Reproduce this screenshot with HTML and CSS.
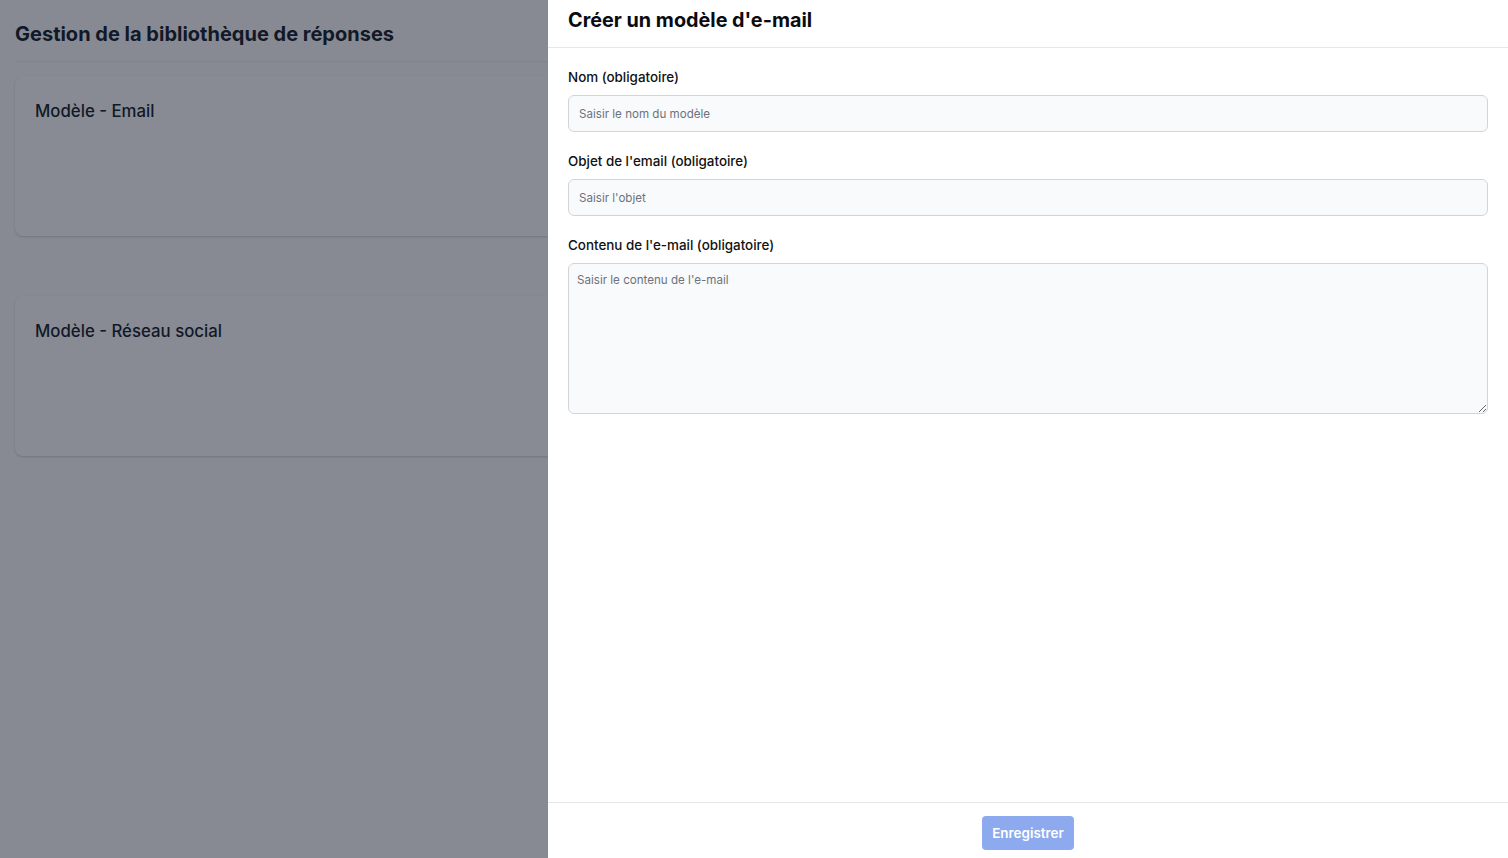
FILE: index.html
```html
<!DOCTYPE html>
<html lang="fr">
<head>
<meta charset="utf-8">
<title>Bibliothèque de réponses</title>
<link rel="stylesheet" href="styles.css">
</head>
<body>
<div class="page">
  <h1 class="page-title">Gestion de la bibliothèque de réponses</h1>
  <div class="cards">
    <div class="card"><h2 class="card-title">Modèle - Email</h2></div>
    <div class="card"><h2 class="card-title">Modèle - Réseau social</h2></div>
  </div>
</div>
<div class="overlay"></div>
<aside class="drawer">
  <header class="drawer-header">
    <h2 class="drawer-title">Créer un modèle d'e-mail</h2>
  </header>
  <div class="drawer-body">
    <div class="field">
      <label class="label">Nom (obligatoire)</label>
      <input class="input" type="text" placeholder="Saisir le nom du modèle">
    </div>
    <div class="field">
      <label class="label">Objet de l'email (obligatoire)</label>
      <input class="input" type="text" placeholder="Saisir l'objet">
    </div>
    <div class="field">
      <label class="label">Contenu de l'e-mail (obligatoire)</label>
      <textarea class="textarea" placeholder="Saisir le contenu de l'e-mail"></textarea>
    </div>
  </div>
  <footer class="drawer-footer">
    <button class="btn" disabled>Enregistrer</button>
  </footer>
</aside>
</body>
</html>
```
FILE: styles.css
```css
* { box-sizing: border-box; }
html, body { margin: 0; height: 100%; }
body {
  font-family: Inter, "Noto Sans", sans-serif;
  background: #fdfdfd;
  color: #111827;
  overflow: hidden;
}
.page {
  padding: 0 15px;
}
.page-title {
  margin: 0;
  padding: 21px 0 14px;
  font-size: 20px;
  line-height: 26px;
  font-weight: 700;
  border-bottom: 1px solid #eceef2;
}
.cards {
  display: flex;
  flex-direction: column;
  gap: 60px;
  padding-top: 14px;
}
.card {
  height: 160px;
  background: #ffffff;
  border-radius: 8px;
  box-shadow: 0 1px 3px rgba(0,0,0,0.12), 0 1px 2px rgba(0,0,0,0.06);
  padding: 21px 20px;
}
.card-title {
  margin: 0;
  font-size: 16.8px;
  line-height: 28px;
  font-weight: 500;
}
.overlay {
  position: fixed;
  inset: 0;
  background: rgba(17, 24, 39, 0.5);
}
.drawer {
  position: fixed;
  top: 0;
  right: 0;
  bottom: 0;
  width: 960px;
  background: #fff;
  display: flex;
  flex-direction: column;
}
.drawer-header {
  padding: 7px 20px 0;
  height: 48px;
  border-bottom: 1px solid #e5e7eb;
}
.drawer-title {
  margin: 0;
  font-size: 19.8px;
  line-height: 26px;
  font-weight: 700;
  color: #0b0b0f;
}
.drawer-body {
  flex: 1;
  padding: 20px 20px;
  display: flex;
  flex-direction: column;
  gap: 20px;
}
.field {
  display: flex;
  flex-direction: column;
  gap: 9px;
}
.label {
  font-size: 13.4px;
  line-height: 18px;
  font-weight: 500;
  color: #111;
}
.input, .textarea {
  width: 100%;
  font-family: Inter, "Noto Sans", sans-serif;
  font-size: 11.6px;
  background: #f9fafb;
  border: 1px solid #d1d5db;
  border-radius: 6px;
  color: #111827;
  outline: none;
}
.input {
  height: 37px;
  padding: 0 10px;
}
.textarea {
  height: 151px;
  padding: 8px 8px;
  line-height: 16px;
  resize: vertical;
  display: block;
}
.input::placeholder, .textarea::placeholder { color: #6b7280; }
.drawer-footer {
  height: 56px;
  border-top: 1px solid #e5e7eb;
  display: flex;
  justify-content: center;
  padding-top: 13px;
}
.btn {
  width: 92px;
  height: 34px;
  border: none;
  border-radius: 4px;
  background: #8eaaee;
  color: #fff;
  font-family: Inter, "Noto Sans", sans-serif;
  font-size: 13.4px;
  font-weight: 600;
}
```
